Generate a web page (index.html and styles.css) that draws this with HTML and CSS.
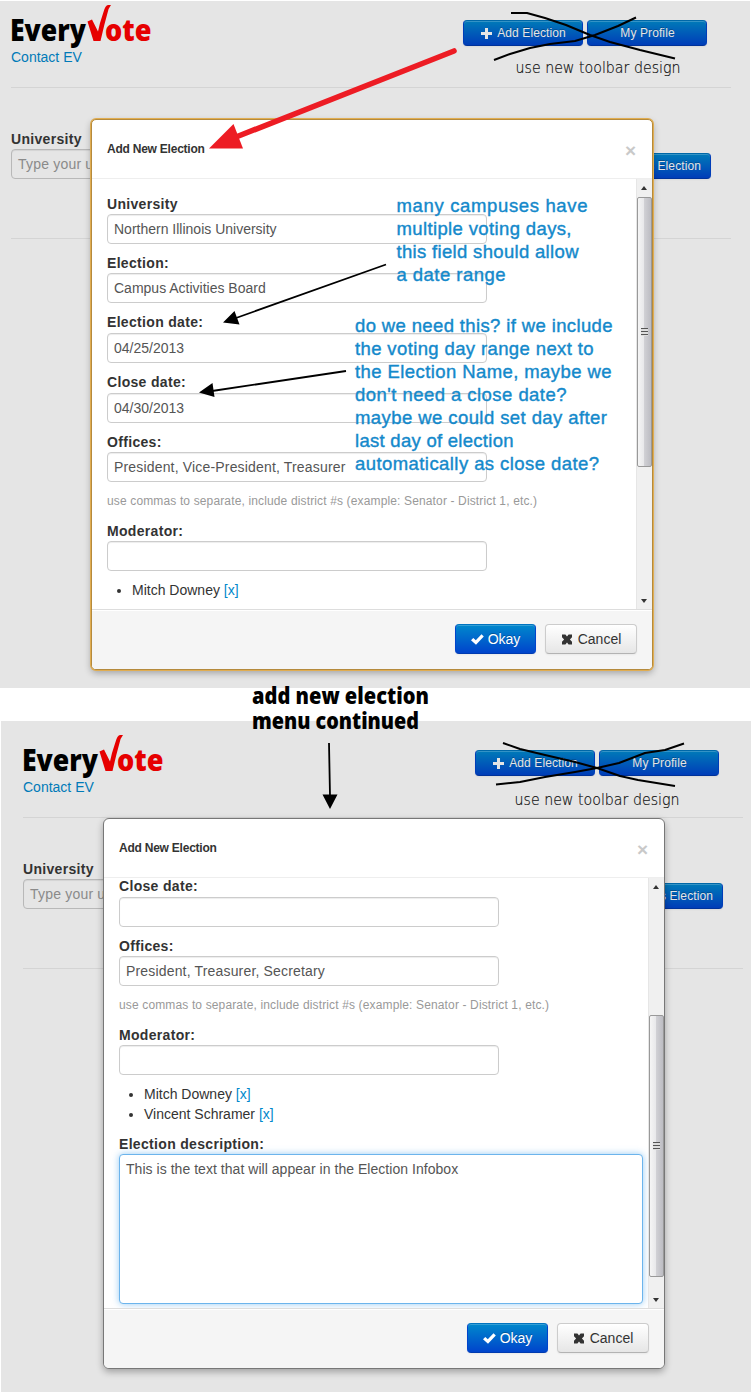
FILE: index.html
```html
<!DOCTYPE html>
<html lang="en">
<head>
<meta charset="utf-8">
<title>EveryVote - Add New Election</title>
<link rel="stylesheet" href="styles.css">
</head>
<body>
<svg class="defs" width="0" height="0">
  <symbol id="logo" viewBox="0 0 144 46" overflow="visible">
    <text class="logo-text" x="-1" y="35.500" textLength="76" lengthAdjust="spacingAndGlyphs">Every</text>
    <path fill="#e60000" d="M76.500 16.500L81 14.500L87 26.500L89 18L92.500 7Q94.500 0 97 0H100Q97.500 3 96.500 8L93.300 20L89.500 36H82.500Z"/>
    <text class="logo-text red" x="94" y="35.500" textLength="46.500" lengthAdjust="spacingAndGlyphs">ote</text>
  </symbol>
  <symbol id="plus" viewBox="0 0 11 11"><path d="M4 0h3v4h4v3H7v4H4V7H0V4h4z"/></symbol>
  <symbol id="check" viewBox="0 0 13 11"><path d="M0 6.300 2.300 4l2.500 2.300L10.500.3 12.800 2.500 5 10.800z"/></symbol>
  <symbol id="times" viewBox="0 0 12 11"><path d="M1 .500h3.400L6 2.500 7.600.5H11v2.800L8.900 5.500 11 7.700v2.800H7.600L6 8.500l-1.600 2H1V7.700L3.100 5.500 1 3.300z"/></symbol>
</svg>

<main class="board">
  <section class="screen first">
    <header class="topbar">
      <div class="brand">
        <svg class="logo" width="144" height="46"><use href="#logo"/></svg>
        <a class="contact">Contact EV</a>
      </div>
      <nav class="actions">
        <button class="btn small primary"><svg class="plus"><use href="#plus"/></svg>Add Election</button>
        <button class="btn small primary">My Profile</button>
      </nav>
    </header>
    <div class="search">
      <div>
        <div class="label">University</div>
        <div class="input dim">Type your university</div>
      </div>
      <button class="btn small primary find">s Election</button>
    </div>

    <div class="modal gold">
      <div class="modal-head"><h6>Add New Election</h6><span class="close">×</span></div>
      <div class="modal-main">
        <div class="modal-body">
          <div class="label">University</div>
          <div class="input">Northern Illinois University</div>
          <div class="label">Election:</div>
          <div class="input">Campus Activities Board</div>
          <div class="label date">Election date:</div>
          <div class="input">04/25/2013</div>
          <div class="label date">Close date:</div>
          <div class="input">04/30/2013</div>
          <div class="label">Offices:</div>
          <div class="input list">President, Vice-President, Treasurer</div>
          <p class="help">use commas to separate, include district #s (example: Senator - District 1, etc.)</p>
          <div class="label">Moderator:</div>
          <div class="input"></div>
          <ul class="people"><li>Mitch Downey <a>[x]</a></li></ul>
        </div>
        <div class="scrollbar"><i class="up"></i><div class="thumb top"><i class="grip"></i></div><i class="down"></i></div>
      </div>
      <footer class="modal-foot">
        <button class="btn primary"><svg class="check"><use href="#check"/></svg>Okay</button>
        <button class="btn plain"><svg class="times"><use href="#times"/></svg>Cancel</button>
      </footer>
    </div>
  </section>

  <section class="screen second">
    <header class="topbar">
      <div class="brand">
        <svg class="logo" width="144" height="46"><use href="#logo"/></svg>
        <a class="contact">Contact EV</a>
      </div>
      <nav class="actions">
        <button class="btn small primary"><svg class="plus"><use href="#plus"/></svg>Add Election</button>
        <button class="btn small primary">My Profile</button>
      </nav>
    </header>
    <div class="search">
      <div>
        <div class="label">University</div>
        <div class="input dim">Type your university</div>
      </div>
      <button class="btn small primary find">s Election</button>
    </div>

    <div class="modal">
      <div class="modal-head"><h6>Add New Election</h6><span class="close">×</span></div>
      <div class="modal-main">
        <div class="modal-body scrolled">
          <div class="label date">Close date:</div>
          <div class="input"></div>
          <div class="label">Offices:</div>
          <div class="input list">President, Treasurer, Secretary</div>
          <p class="help">use commas to separate, include district #s (example: Senator - District 1, etc.)</p>
          <div class="label">Moderator:</div>
          <div class="input"></div>
          <ul class="people"><li>Mitch Downey <a>[x]</a></li><li>Vincent Schramer <a>[x]</a></li></ul>
          <div class="label desc">Election description:</div>
          <div class="input area">This is the text that will appear in the Election Infobox</div>
        </div>
        <div class="scrollbar"><i class="up"></i><div class="thumb bottom"><i class="grip"></i></div><i class="down"></i></div>
      </div>
      <footer class="modal-foot">
        <button class="btn primary"><svg class="check"><use href="#check"/></svg>Okay</button>
        <button class="btn plain"><svg class="times"><use href="#times"/></svg>Cancel</button>
      </footer>
    </div>
  </section>

  <svg class="notes" width="751" height="1392" viewBox="0 0 751 1392">
    <g class="scribble">
      <path d="M511 13H527L545 18L566 25L590 35L610 42L640 50L675 58.500"/>
      <path d="M494 60L510 54L530 48L550 44L575 41L595 35L618 26L636 17.500"/>
      <path d="M503 743L520 749L545 755L575 762L597 768L620 776L638 780L675 786"/>
      <path d="M496 784.500L520 782L545 777L575 772L597 768L619 763L645 753L665 750L684 743.500"/>
    </g>
    <path d="M454 51L236 137" stroke="#ed1c24" stroke-width="5.600" stroke-linecap="round"/>
    <path d="M209 148.500L233.500 124L243 148.500Z" fill="#ed1c24"/>
    <g stroke="#000" stroke-width="1.800"><path d="M386 264.500L236 318M346 371L212 391M329 743L330 796"/></g>
    <path d="M223 322.500L234.500 311L239.500 324.500ZM199 392.500L212.500 383L214.500 397ZM330 809L322.500 794.500H337.500Z"/>
    <g class="note">
      <text x="396.500" y="212" textLength="191">many campuses have</text>
      <text x="396.500" y="235" textLength="175">multiple voting days,</text>
      <text x="396.500" y="258" textLength="182">this field should allow</text>
      <text x="396.500" y="281" textLength="109">a date range</text>
      <text x="355" y="332" textLength="257.500">do we need this? if we include</text>
      <text x="355" y="355" textLength="238.500">the voting day range next to</text>
      <text x="355" y="378" textLength="256.500">the Election Name, maybe we</text>
      <text x="355" y="401" textLength="211.500">don't need a close date?</text>
      <text x="355" y="424" textLength="252">maybe we could set day after</text>
      <text x="355" y="447" textLength="158.500">last day of election</text>
      <text x="355" y="470" textLength="244">automatically as close date?</text>
    </g>
    <g class="thin">
      <text x="515.500" y="73" textLength="165" lengthAdjust="spacingAndGlyphs">use new toolbar design</text>
      <text x="514.500" y="805" textLength="165" lengthAdjust="spacingAndGlyphs">use new toolbar design</text>
    </g>
    <g class="heavy">
      <text x="252" y="703.500" textLength="177" lengthAdjust="spacingAndGlyphs">add new election</text>
      <text x="252" y="729" textLength="167" lengthAdjust="spacingAndGlyphs">menu continued</text>
    </g>
  </svg>
</main>
</body>
</html>
```
FILE: styles.css
```css
* { box-sizing: border-box; }
body { margin: 0; background: #fff; color: #333; font: 14px/20px "Liberation Sans", Arial, sans-serif; }
.defs { position: absolute; }
.board { position: relative; width: 751px; height: 1392px; padding-top: 1px; overflow: hidden; }
.screen { position: relative; background: #e5e5e5; }
.first { width: 750px; height: 687px; padding: 4px 19px 0 11px; }
.second { width: 750px; height: 671px; margin: 33px 0 0 1px; padding: 14px 8px 0 22px; }

.topbar { display: flex; justify-content: space-between; height: 83px; border-bottom: 1px solid #d4d4d4; }
.brand { display: flex; flex-direction: column; }
.logo { display: block; margin-bottom: -4px; overflow: visible; }
.logo-text { font: 800 29.5px "Open Sans", "Noto Sans", sans-serif; }
.red { fill: #e60000; }
.contact { color: #007ab8; }
.actions { display: flex; gap: 4px; padding: 15px 24px 0 0; }
.search { display: flex; justify-content: space-between; height: 151px; padding: 41px 20px 0 0; border-bottom: 1px solid #d4d4d4; }
.find { margin-top: 24px; }

.btn { display: flex; align-items: center; justify-content: center; height: 30px; padding: 0; border: 1px solid; border-radius: 4px; font: 14px/20px "Liberation Sans", Arial, sans-serif; }
.btn svg { fill: currentColor; }
.primary { width: 81px; color: #fff; background: linear-gradient(#08c, #04c); border-color: #0074c0 #04c #003bb0; box-shadow: inset 0 1px rgba(255,255,255,.2), 0 1px 2px rgba(0,0,0,.05); text-shadow: 0 -1px rgba(0,0,0,.25); }
.small { width: 120px; height: 26px; padding-left: 1px; font-size: 12px; letter-spacing: .1px; color: #e5e5e5; background: linear-gradient(#007ab8, #003db8); border-color: #0068a8 #003db8 #003299; }
.search .btn { justify-content: flex-end; padding-right: 9px; }
.plain { width: 92px; color: #333; background: linear-gradient(#fff, #e6e6e6); border-color: #ccc #ccc #b3b3b3; box-shadow: inset 0 1px #fff, 0 1px 2px rgba(0,0,0,.05); }
.plus { width: 11px; height: 11px; margin-right: 5px; }
.check { width: 13px; height: 11px; margin-right: 4px; }
.times { width: 12px; height: 11px; margin-right: 5px; }

.label { height: 20px; font-weight: bold; letter-spacing: .32px; }
.label.date { height: 21px; }
.input { width: 380px; height: 30px; padding: 4px 6px; border: 1px solid #ccc; border-radius: 4px; background: #fff; color: #555; box-shadow: inset 0 1px 1px rgba(0,0,0,.075); white-space: nowrap; }
.input.list { letter-spacing: .17px; }
.input.dim { width: 210px; background: #e5e5e5; border-color: #b8b8b8; color: #8a8a8a; letter-spacing: .2px; }
.input + .label { margin-top: 9px; }
.help { margin: 9px 0 10px; color: #999; font-size: 12px; letter-spacing: .14px; }
.people { margin: 9px 0 0; padding-left: 25px; }
.people a { color: #08c; }
.desc { margin-top: 10px; }
.input.area { width: 524px; height: 150px; border-color: #6cb4ec; box-shadow: 0 0 7px rgba(82,168,236,.6); letter-spacing: .04px; }

.modal { position: absolute; left: 102px; top: 97px; width: 562px; height: 551px; display: flex; flex-direction: column; background: #fff; border: 1px solid #777; border-radius: 6px; box-shadow: 0 3px 7px rgba(0,0,0,.3); overflow: hidden; }
.modal.gold { left: 91px; top: 118px; border-color: #b58a3c; box-shadow: 0 0 0 1px #e0ad52, 0 3px 7px rgba(0,0,0,.3); border-radius: 5px; }
.modal-head { display: flex; justify-content: space-between; align-items: center; height: 59px; padding: 0 16px 0 15px; border-bottom: 1px solid #eee; }
h6 { margin: 0; font-size: 12px; letter-spacing: -.23px; }
.close { padding-top: 4px; font-size: 19px; font-weight: bold; color: #c9c9c9; }
.modal-main { display: flex; height: 430px; }
.modal-body { flex: 1; min-width: 0; padding: 15px 0 0 15px; overflow: hidden; }
.scrolled { padding-top: 0; }
.scrolled > :first-child { margin-top: -2px; }
.scrollbar { display: flex; flex-direction: column; align-items: center; width: 16px; padding: 7px 1px 6px 0; background: #f0f0f0; border-left: 1px solid #e6e6e6; }
.up { border: 3.500px solid transparent; border-top: 0; border-bottom: 4px solid #333; }
.down { margin-top: auto; border: 3.500px solid transparent; border-bottom: 0; border-top: 4px solid #333; }
.thumb { display: flex; align-items: center; justify-content: center; width: 15px; flex-shrink: 0; border: 1px solid #999; border-radius: 2px; background: linear-gradient(90deg, #f5f5f5, #e8e8ea 45%, #d0d0d4 50%, #bcbcc2); }
.thumb.top { height: 270px; margin-top: 7px; }
.thumb.bottom { height: 262px; margin-top: 126px; }
.grip { width: 7px; height: 8px; background: repeating-linear-gradient(#555 0 1px, #ddd 1px 3px); }
.modal-foot { flex: 1; display: flex; justify-content: flex-end; gap: 9px; padding: 14px 15px 0; background: #f5f5f5; border-top: 1px solid #ddd; box-shadow: inset 0 1px #fff; }

.notes { position: absolute; left: 0; top: 0; }
.scribble { fill: none; stroke: #000; stroke-width: 2; stroke-linejoin: round; }
.note { fill: #1489cb; stroke: #1489cb; stroke-width: .4px; font: 18.5px "Liberation Sans", Arial, sans-serif; }
.thin { fill: #111; stroke: #111; stroke-width: .2px; font: 200 16.5px "DejaVu Sans", sans-serif; }
.heavy { font: 800 22px "Open Sans", "Noto Sans", sans-serif; }
```
